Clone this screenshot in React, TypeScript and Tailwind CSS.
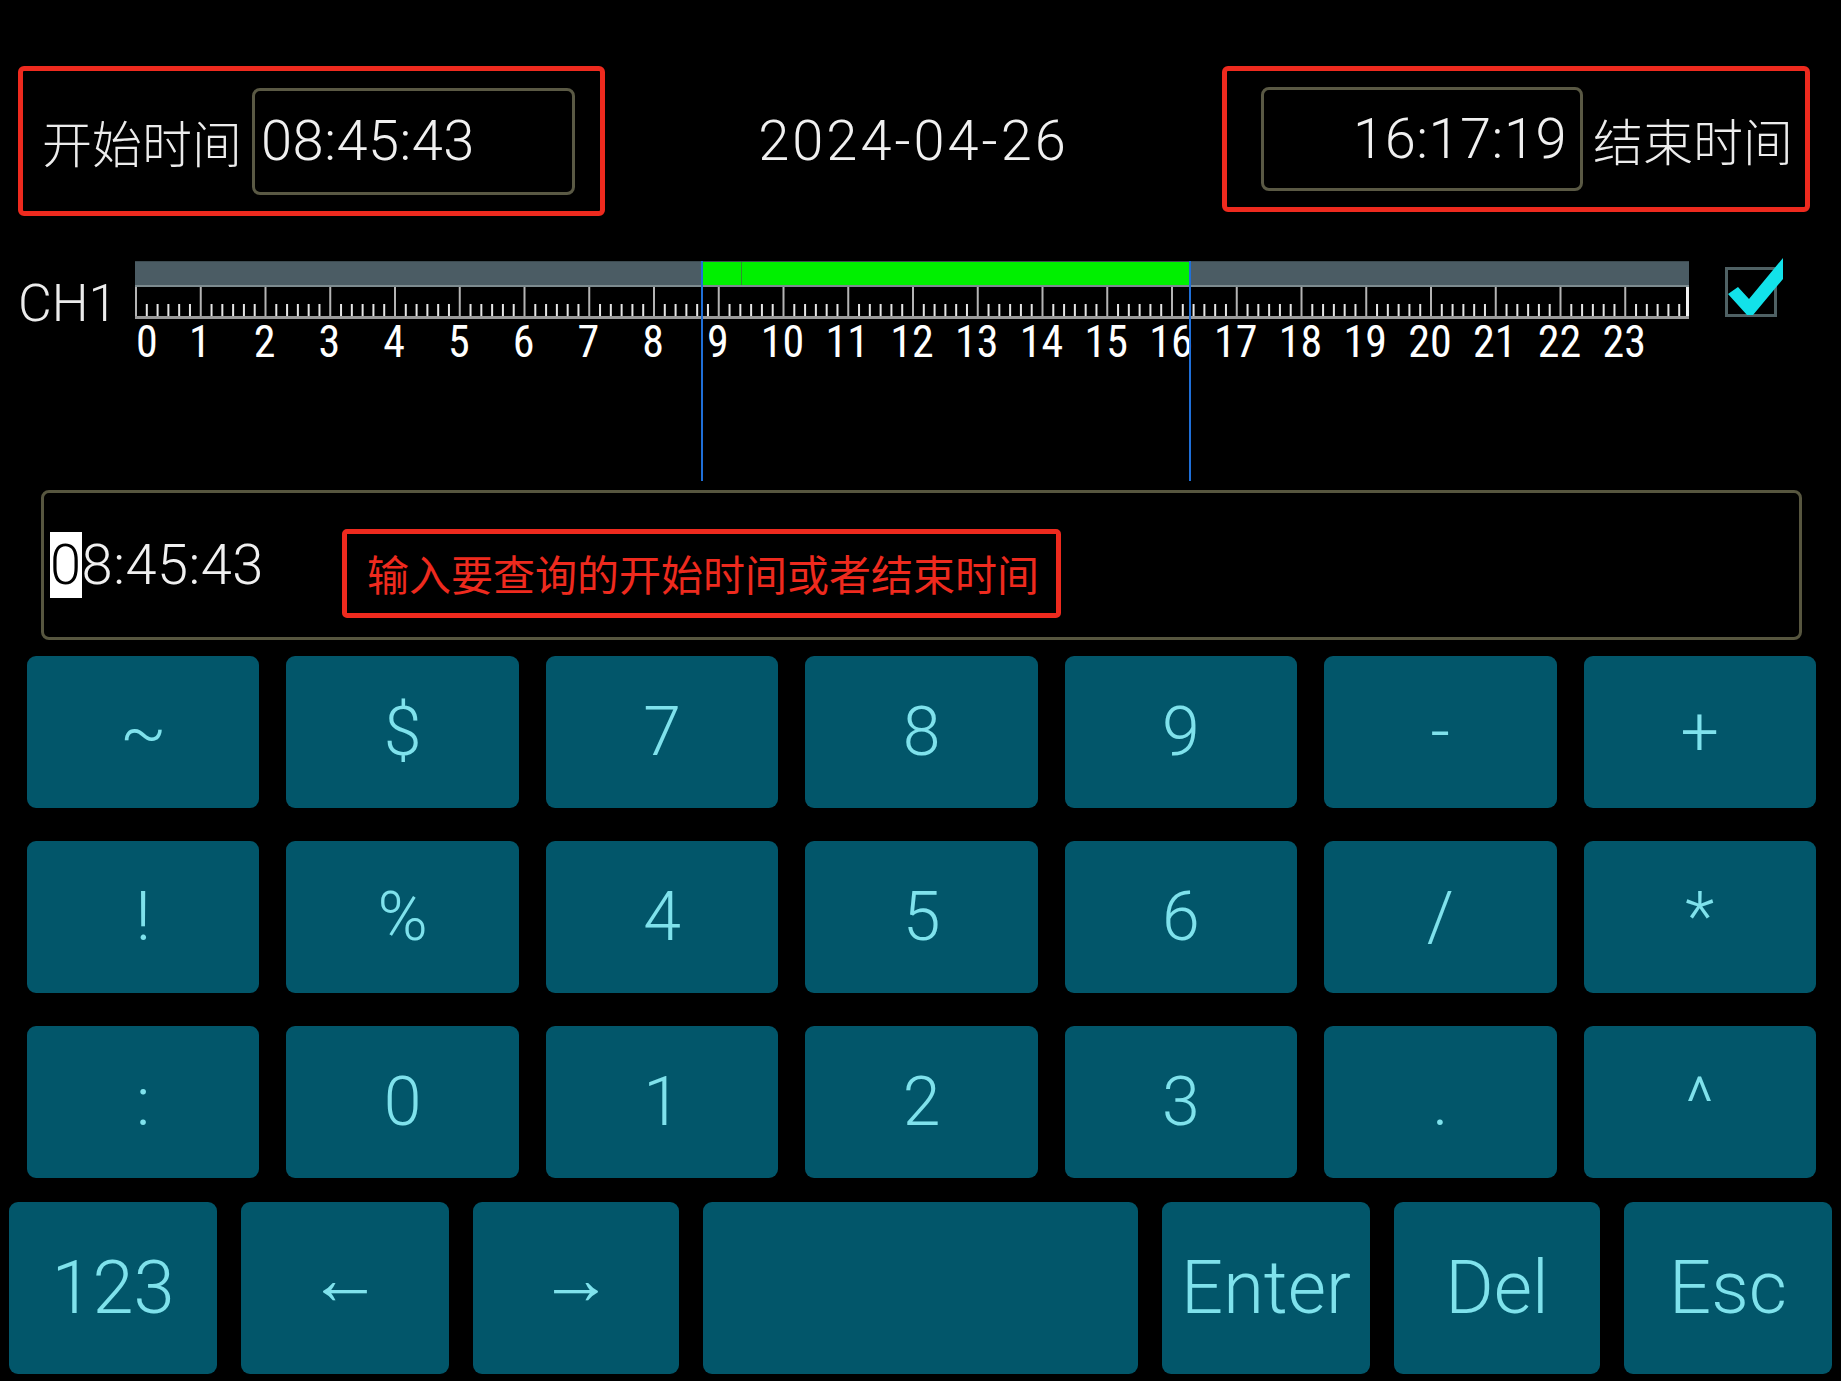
import React from 'react'

const HOUR = 64.75
const at = (h: number, m: number, s: number) => (h + m / 60 + s / 3600) * HOUR

const start = at(8, 45, 43)
const end = at(16, 17, 19)

const keyRows = [
  ['~', '$', '7', '8', '9', '-', '+'],
  ['!', '%', '4', '5', '6', '/', '*'],
  [':', '0', '1', '2', '3', '.', '^'],
]

const bottomKeys = [
  { label: '123', w: 'w-[208px]' },
  { label: '←', w: 'w-[208px] pb-[18px]' },
  { label: '→', w: 'w-[206px] pb-[18px]' },
  { label: '', w: 'w-[435px]' },
  { label: 'Enter', w: 'w-[208px]' },
  { label: 'Del', w: 'w-[206px]' },
  { label: 'Esc', w: 'w-[208px]' },
]

const Key = ({ label, className = '' }: { label: string; className?: string }) => (
  <div
    className={`flex items-center justify-center rounded-[9px] bg-[#02566a] font-['Roboto',sans-serif] font-light leading-none text-[#7fe2ec] ${className}`}
  >
    {label}
  </div>
)

const Scale = () => {
  const hours = Array.from({ length: 25 }, (_, i) => i)
  return (
    <svg width="1554" height="32" className="block">
      <rect x="0" y="29" width="1554" height="3" fill="#9a9a9a" />
      {hours.map((h) => (
        <g key={h}>
          <rect x={Math.min(h * HOUR, 1551)} y="0" width={h === 24 ? 3 : 2} height="29" fill={h === 24 ? '#f2f2f2' : '#b4b4b4'} />
          {h < 24 &&
            [1, 2, 3, 4, 5].map((j) => (
              <rect key={j} x={h * HOUR + (j * HOUR) / 6} y="17" width="2" height="12" fill="#e6e6e6" />
            ))}
        </g>
      ))}
    </svg>
  )
}

export default function App() {
  return (
    <div className="h-[1381px] w-[1841px] overflow-hidden bg-black">
      {/* top: start time, date, end time */}
      <div className="flex items-start pl-[18px] pr-[31px] pt-[66px]">
        <div className="flex h-[150px] w-[587px] items-center rounded-[6px] border-[5px] border-[#ee2a1e] pl-[19px]">
          <span className="font-['Noto_Sans_CJK_SC',sans-serif] text-[50px] font-light leading-none text-[#ececec]">
            开始时间
          </span>
          <div className="ml-[10px] flex h-[107px] w-[323px] items-center rounded-[8px] border-[3px] border-[#5a5944] pl-[6px]">
            <span className="font-['Roboto',sans-serif] text-[56px] font-light leading-none tracking-[0.5px] text-[#f0f0f0]">08:45:43</span>
          </div>
        </div>
        <div className="flex h-[150px] flex-1 items-center justify-center font-['Roboto',sans-serif] text-[56px] font-light leading-none tracking-[3px] text-[#f0f0f0]">
          2024-04-26
        </div>
        <div className="flex h-[146px] w-[588px] items-center rounded-[6px] border-[5px] border-[#ee2a1e] pl-[34px]">
          <div className="flex h-[104px] w-[322px] items-center justify-end rounded-[8px] border-[3px] border-[#5a5944] pr-[13px]">
            <span className="font-['Roboto',sans-serif] text-[56px] font-light leading-none tracking-[0.5px] text-[#f0f0f0]">16:17:19</span>
          </div>
          <span className="ml-[10px] font-['Noto_Sans_CJK_SC',sans-serif] text-[50px] font-light leading-none text-[#ececec]">
            结束时间
          </span>
        </div>
      </div>

      {/* timeline */}
      <div className="mt-[45px] flex h-[220px] items-start pl-[18px]">
        <div className="mt-[17px] w-[117px] font-['Roboto',sans-serif] text-[52px] font-light leading-none text-[#ececec]">CH1</div>
        <div className="relative w-[1554px]">
          <div className="relative h-[26px] border-t border-b-2 border-[#3d4b51] border-b-[#7d8b8f] bg-[#4b5c64]">
            <div className="absolute top-0 h-[23px] bg-[#00f000]" style={{ left: start, width: end - start }} />
            <div className="absolute top-0 h-[23px] w-px bg-[#2f8f2f]" style={{ left: at(9, 22, 0) }} />
          </div>
          <Scale />
          <div className="relative h-[44px]">
            {Array.from({ length: 24 }, (_, i) => (
              <span
                key={i}
                className={`absolute top-px font-['Liberation_Sans_Narrow','Roboto_Condensed','DejaVu_Sans_Condensed','Roboto',sans-serif] text-[44px] leading-none text-white ${
                  i === 0 ? 'translate-x-px' : '-translate-x-1/2'
                }`}
                style={{ left: i * HOUR }}
              >
                {i}
              </span>
            ))}
          </div>
          <div className="absolute top-0 h-[220px] w-[2px] bg-[#1f6fd8]" style={{ left: start - 1 }} />
          <div className="absolute top-0 h-[220px] w-[2px] bg-[#1f6fd8]" style={{ left: end - 1 }} />
        </div>
        <div className="relative ml-[36px] mt-[6px] h-[50px] w-[52px] border-[3px] border-[#4f6164]">
          <svg width="58" height="58" viewBox="0 0 58 58" className="absolute -top-[12px] left-0">
            <polygon points="0,36 10,29 21,41 55,0 55,21 25,57 19,57" fill="#12e2ea" />
          </svg>
        </div>
      </div>

      {/* input */}
      <div className="ml-[41px] mt-[9px] flex h-[150px] w-[1761px] items-center rounded-[8px] border-[3px] border-[#57563f] pl-[6px]">
        <span className="font-['Roboto',sans-serif] text-[56px] font-light leading-[58px] tracking-[0.5px] text-[#f0f0f0]">
          <span className="bg-white text-black">0</span>8:45:43
        </span>
        <div className="ml-[78px] mt-[16px] flex h-[89px] w-[719px] items-center rounded-[5px] border-[5px] border-[#ee2a1e] pl-[20px]">
          <span className="font-['Noto_Sans_CJK_SC',sans-serif] text-[42px] leading-none text-[#ee2a1e]">
            输入要查询的开始时间或者结束时间
          </span>
        </div>
      </div>

      {/* keyboard */}
      <div className="mt-[16px] flex flex-col">
        <div className="grid grid-cols-7 gap-x-[27px] gap-y-[33px] pl-[27px] pr-[25px]">
          {keyRows.flat().map((k, i) => (
            <Key key={i} label={k} className="h-[152px] text-[68px]" />
          ))}
        </div>
        <div className="mt-[24px] flex gap-[24px] pl-[9px]">
          {bottomKeys.map((k, i) => (
            <Key key={i} label={k.label} className={`h-[172px] text-[74px] ${k.w}`} />
          ))}
        </div>
      </div>
    </div>
  )
}
